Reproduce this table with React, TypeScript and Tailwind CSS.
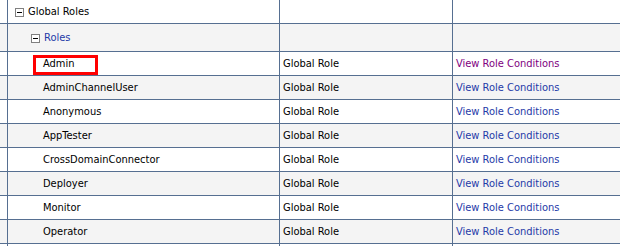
import React from "react";

const roles = [
  "Admin",
  "AdminChannelUser",
  "Anonymous",
  "AppTester",
  "CrossDomainConnector",
  "Deployer",
  "Monitor",
  "Operator",
];

const Minus: React.FC = () => (
  <span className="inline-flex w-[9px] h-[9px] border border-[#808080] bg-white items-center justify-center mr-[4px] shrink-0">
    <span className="w-[5px] h-px bg-black" />
  </span>
);

type RowProps = {
  gray?: boolean;
  h: string;
  first: React.ReactNode;
  second?: React.ReactNode;
  third?: React.ReactNode;
};

const Row: React.FC<RowProps> = ({ gray, h, first, second, third }) => (
  <div className={`flex ${h} border-b border-[#566f91] ${gray ? "bg-[#f4f4f4]" : "bg-white"}`}>
    <div className="w-[8px] shrink-0 border-r border-[#566f91]" />
    <div className="w-[272px] shrink-0 border-r border-[#566f91] flex items-center pt-[2px]">{first}</div>
    <div className="w-[173px] shrink-0 border-r border-[#566f91] flex items-center pl-[3px] pt-[2px]">{second}</div>
    <div className="flex-1 flex items-center pl-[3px] pt-[2px]">{third}</div>
  </div>
);

const App: React.FC = () => {
  return (
    <div
      className="w-[620px] h-[246px] overflow-hidden bg-white text-[11px] text-black"
      style={{ fontFamily: "'DejaVu Sans Condensed', 'Liberation Sans', sans-serif" }}
    >
      <Row
        h="h-[24px]"
        first={
          <div className="flex items-center pl-[7px]">
            <Minus />
            <span>Global Roles</span>
          </div>
        }
      />
      <Row
        gray
        h="h-[28px]"
        first={
          <div className="flex items-center pl-[23px]">
            <Minus />
            <span className="text-[#1f3aa8]">Roles</span>
          </div>
        }
      />
      {roles.map((r, i) => (
        <Row
          key={r}
          gray={i % 2 === 1}
          h="h-[24px]"
          first={
            i === 0 ? (
              <div className="ml-[25px] w-[65px] h-[20px] border-[3px] border-[#ff0000] flex items-center pl-[7px]">
                {r}
              </div>
            ) : (
              <span className="pl-[35px]">{r}</span>
            )
          }
          second={<span>Global Role</span>}
          third={
            <span className={i === 0 ? "text-[#800080]" : "text-[#1f3aa8]"}>View Role Conditions</span>
          }
        />
      ))}
      <div className="flex h-[10px] bg-white">
        <div className="w-[8px] shrink-0 border-r border-[#566f91]" />
        <div className="w-[272px] shrink-0 border-r border-[#566f91]" />
        <div className="w-[173px] shrink-0 border-r border-[#566f91]" />
        <div className="flex-1" />
      </div>
    </div>
  );
};

export default App;
